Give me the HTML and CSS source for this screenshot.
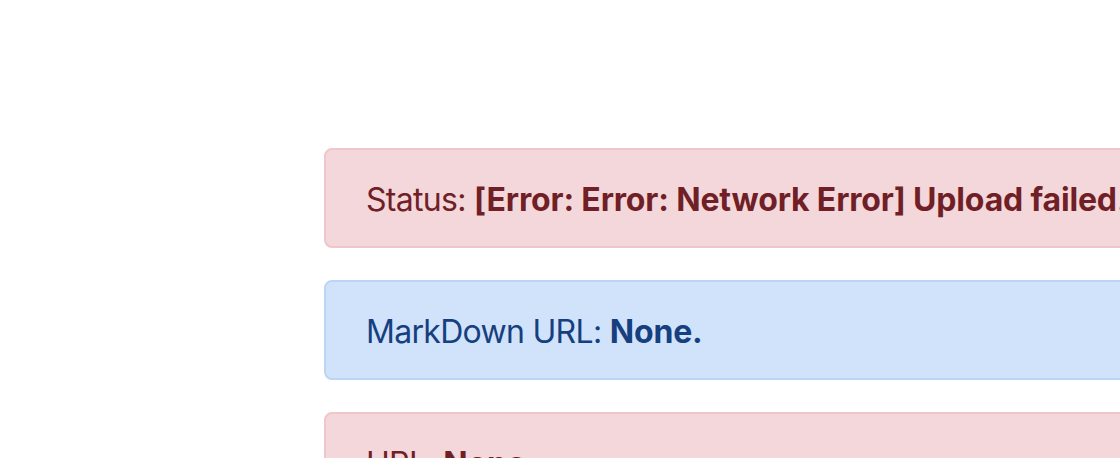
FILE: index.html
```html
<!DOCTYPE html>
<html lang="en">
<head>
<meta charset="utf-8">
<title>Upload status</title>
<link rel="stylesheet" href="styles.css">
</head>
<body>
<main class="page">
  <div class="alerts">
    <div class="alert alert-danger">Status: <strong>[Error: Error: Network Error] Upload failed.</strong></div>
    <div class="alert alert-primary">MarkDown URL: <strong>None.</strong></div>
    <div class="alert alert-danger">URL: <strong>None.</strong></div>
  </div>
</main>
</body>
</html>
```
FILE: styles.css
```css
html, body {
  margin: 0;
  padding: 0;
  overflow: hidden;
  background: #ffffff;
}
.page {
  padding: 148px 0 0 324px;
  font-family: Inter, "Liberation Sans", sans-serif;
}
.alerts {
  width: 1100px;
  display: flex;
  flex-direction: column;
  gap: 32px;
}
.alert {
  border: 2px solid transparent;
  border-radius: 8px;
  padding: 26px 40px 22px;
  font-size: 32px;
  letter-spacing: -0.7px;
  line-height: 48px;
  white-space: nowrap;
}
.alert strong {
  font-weight: 700;
  letter-spacing: -0.15px;
}
.alert-danger {
  background: #f3d7da;
  border-color: #efc6ca;
  color: #701f26;
}
.alert-primary {
  background: #d1e3fa;
  border-color: #bcd5f5;
  color: #163f80;
}
```
